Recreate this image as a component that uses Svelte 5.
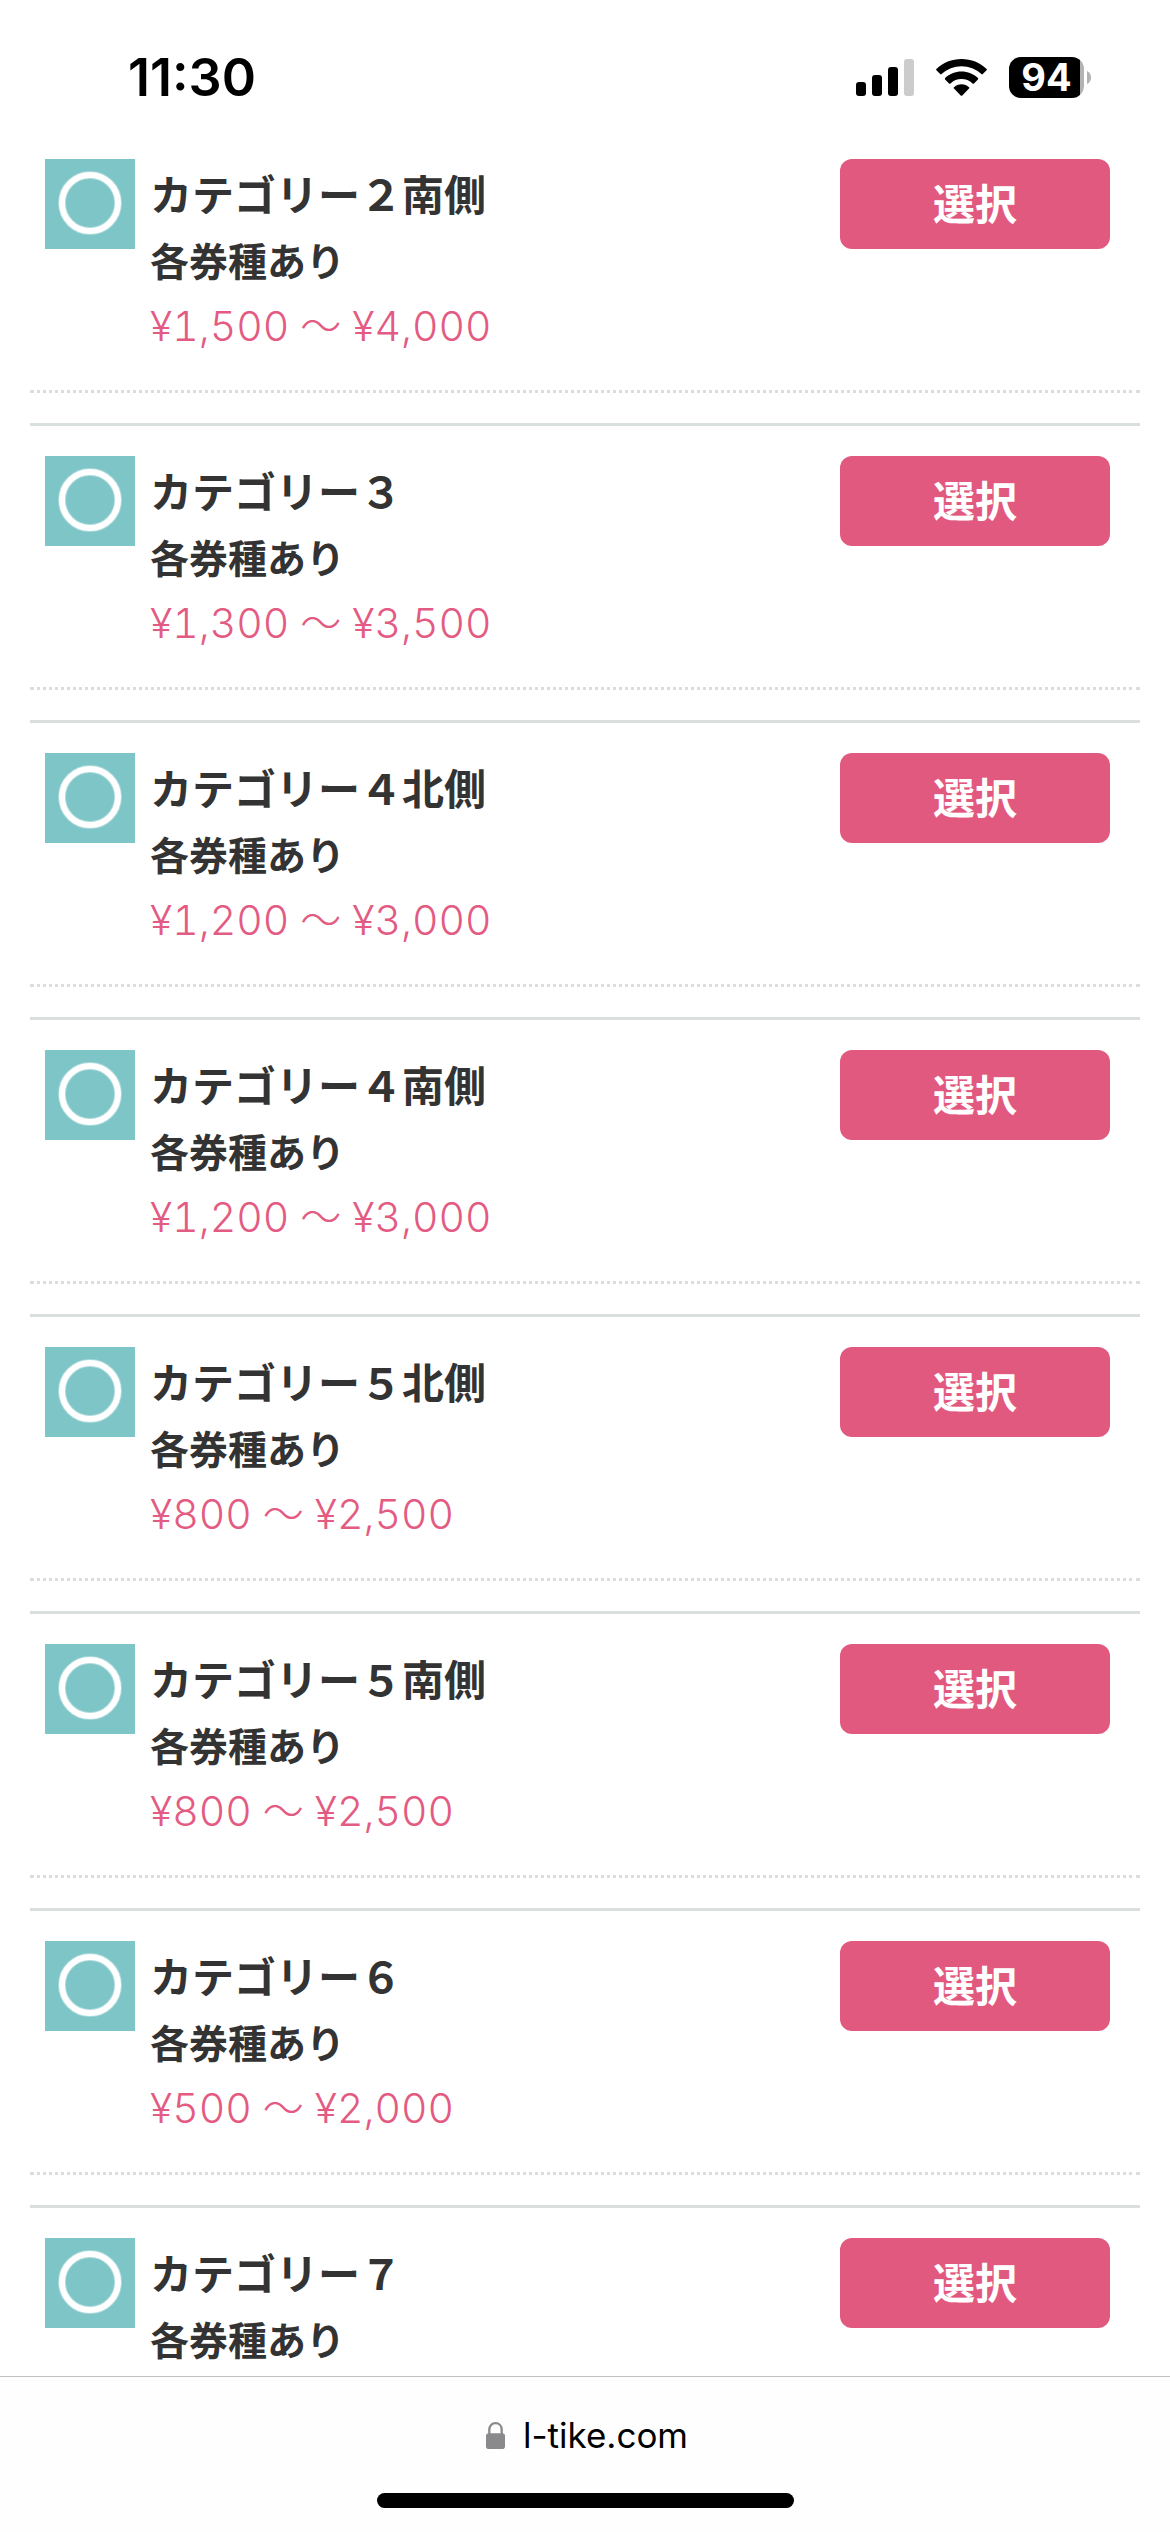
<script>
  const seats = [
    { id: 1, name: 'カテゴリー２南側', price: '¥1,500 〜 ¥4,000' },
    { id: 2, name: 'カテゴリー３', price: '¥1,300 〜 ¥3,500' },
    { id: 3, name: 'カテゴリー４北側', price: '¥1,200 〜 ¥3,000' },
    { id: 4, name: 'カテゴリー４南側', price: '¥1,200 〜 ¥3,000' },
    { id: 5, name: 'カテゴリー５北側', price: '¥800 〜 ¥2,500' },
    { id: 6, name: 'カテゴリー５南側', price: '¥800 〜 ¥2,500' },
    { id: 7, name: 'カテゴリー６', price: '¥500 〜 ¥2,000' },
    { id: 8, name: 'カテゴリー７', price: '' },
  ];

  let selected = $state(null);

  const selectSeat = (id) => {
    selected = id;
  };
</script>

<div class="screen">
  <header class="status-bar">
    <time class="clock">11:30</time>
    <div class="status-icons">
      <svg class="signal" viewBox="0 0 58 37" aria-hidden="true">
        <rect x="0" y="23" width="10" height="14" rx="3" />
        <rect x="16" y="16" width="10" height="21" rx="3" />
        <rect x="32" y="8" width="10" height="29" rx="3" />
        <rect x="48" y="0" width="10" height="37" rx="3" fill="#ccc" />
      </svg>
      <svg class="wifi" viewBox="0 0 51 37" aria-hidden="true">
        <path d="M25.5 0C35.2 0 44 3.700 50.600 9.900Q51.200 10.600 50.600 11.300L46.800 15.100Q46.100 15.700 45.400 15.100A29 29 0 0 0 5.600 15.100Q4.900 15.700 4.200 15.100L.4 11.300Q-.2 10.600 .4 9.900C7 3.700 15.800 0 25.500 0Z" />
        <path d="M25.500 12.600C31.800 12.600 37.600 15 41.900 19.100Q42.500 19.800 41.900 20.500L38 24.400Q37.300 25 36.600 24.400A16.200 16.200 0 0 0 14.400 24.400Q13.700 25 13 24.400L9.100 20.500Q8.500 19.800 9.100 19.100C13.400 15 19.200 12.600 25.500 12.600Z" />
        <path d="M25.500 25.300C28.400 25.300 31 26.400 33 28.200Q33.700 28.900 33 29.600L26.300 36.400Q25.500 37.100 24.700 36.400L18 29.600Q17.300 28.900 18 28.200C20 26.400 22.600 25.300 25.500 25.300Z" />
      </svg>
      <div class="battery">
        <span class="level">94</span>
        <svg class="nub" viewBox="0 0 4 13" aria-hidden="true">
          <path d="M0 0C2.500 1 4 3.500 4 6.500S2.500 12 0 13Z" fill="#b3b3b3" />
        </svg>
      </div>
    </div>
  </header>

  <main class="content">
    <ul class="seat-list">
      {#each seats as seat (seat.id)}
        <li class="seat">
          <div class="seat-body">
            <svg class="availability" viewBox="0 0 90 90" role="img" aria-label="空席あり">
              <rect width="90" height="90" fill="#7dc5c7" />
              <circle cx="45" cy="44" r="28" fill="none" stroke="#fff" stroke-opacity="0.35" stroke-width="8" />
              <circle cx="45" cy="44" r="28" fill="none" stroke="#fff" stroke-width="6" />
            </svg>
            <div class="seat-info">
              <h2 class="seat-name">{seat.name}</h2>
              <p class="seat-type">各券種あり</p>
              {#if seat.price}
                <p class="seat-price">{seat.price}</p>
              {/if}
            </div>
            <button
              type="button"
              class="select-button"
              aria-pressed={selected === seat.id}
              onclick={() => selectSeat(seat.id)}
            >選択</button>
          </div>
        </li>
      {/each}
    </ul>
  </main>

  <footer class="toolbar">
    <button type="button" class="address">
      <svg class="lock" viewBox="0 0 19 27" aria-hidden="true">
        <path d="M3.300 13V7.800C3.300 3.800 5.900 1.200 9.500 1.200S15.700 3.800 15.700 7.800V13" fill="none" stroke="#8a8a8d" stroke-width="2.300" />
        <rect x="0" y="11.300" width="19" height="15.700" rx="2.800" fill="#8a8a8d" />
      </svg>
      <span>l-tike.com</span>
    </button>
    <div class="home-indicator"></div>
  </footer>
</div>

<style>
  :global(body) {
    margin: 0;
    background: #fff;
  }

  .screen {
    display: flex;
    flex-direction: column;
    height: 100vh;
    overflow: hidden;
    color: #333;
    font-family: Inter, "Noto Sans CJK JP", sans-serif;
  }

  .status-bar {
    display: flex;
    flex: none;
    align-items: center;
    justify-content: space-between;
    box-sizing: border-box;
    height: 129px;
    padding: 26px 79px 0 128px;
    color: #000;
  }

  .clock {
    font-size: 52px;
    font-weight: 600;
    line-height: 60px;
  }

  .status-icons {
    display: flex;
    align-items: center;
    gap: 22px;
  }

  .signal {
    width: 58px;
    height: 37px;
  }

  .wifi {
    width: 51px;
    height: 37px;
  }

  .battery {
    display: flex;
    align-items: center;
    gap: 3px;
  }

  .level {
    width: 75px;
    height: 41px;
    border-radius: 12px;
    background: linear-gradient(to right, #000 71px, #b3b3b3 71px);
    color: #fff;
    font-size: 38px;
    font-weight: 700;
    line-height: 41px;
    text-align: center;
  }

  .nub {
    width: 4px;
    height: 13px;
  }

  .content {
    flex: 1;
    min-height: 0;
    overflow: hidden;
  }

  .seat-list {
    margin: 0;
    padding: 0 30px;
    list-style: none;
  }

  .seat {
    margin-bottom: 30px;
    padding-top: 30px;
    border-top: 3px solid #d9dfde;
    border-bottom: 3px dotted #d9dfde;
  }

  .seat:first-child {
    border-top: none;
  }

  .seat-body {
    display: flex;
    align-items: flex-start;
    gap: 15px;
    min-height: 231px;
    padding: 0 30px 0 15px;
    box-sizing: border-box;
  }

  .availability {
    flex: none;
    width: 90px;
    height: 90px;
  }

  .seat-info {
    flex: 1;
  }

  .seat-name,
  .seat-type,
  .seat-price {
    margin: 0;
    line-height: 67px;
  }

  .seat-name,
  .seat-type,
  .select-button {
    font-family: "Noto Sans CJK JP", sans-serif;
    font-weight: 700;
  }

  .seat-name {
    font-size: 42px;
  }

  .seat-type {
    font-size: 39px;
  }

  .seat-price {
    color: #e35b82;
    font-size: 41px;
    font-weight: 300;
    font-variant-numeric: tabular-nums;
  }

  .select-button {
    flex: none;
    width: 270px;
    height: 90px;
    padding: 0 0 6px;
    border: none;
    border-radius: 12px;
    background: #e2597f;
    color: #fff;
    font-size: 42px;
    cursor: pointer;
  }

  .toolbar {
    display: flex;
    flex: none;
    flex-direction: column;
    align-items: center;
    justify-content: space-between;
    box-sizing: border-box;
    height: 156px;
    padding: 34px 0 24px;
    border-top: 1px solid #c2c2c2;
    background: #fefefe;
  }

  .address {
    display: flex;
    align-items: center;
    gap: 18px;
    padding: 0 0 0 4px;
    border: none;
    background: none;
    color: #000;
    font-family: Inter, sans-serif;
    font-size: 35px;
    line-height: 48px;
    cursor: pointer;
  }

  .lock {
    width: 19px;
    height: 27px;
  }

  .home-indicator {
    width: 417px;
    height: 15px;
    border-radius: 8px;
    background: #000;
  }
</style>
